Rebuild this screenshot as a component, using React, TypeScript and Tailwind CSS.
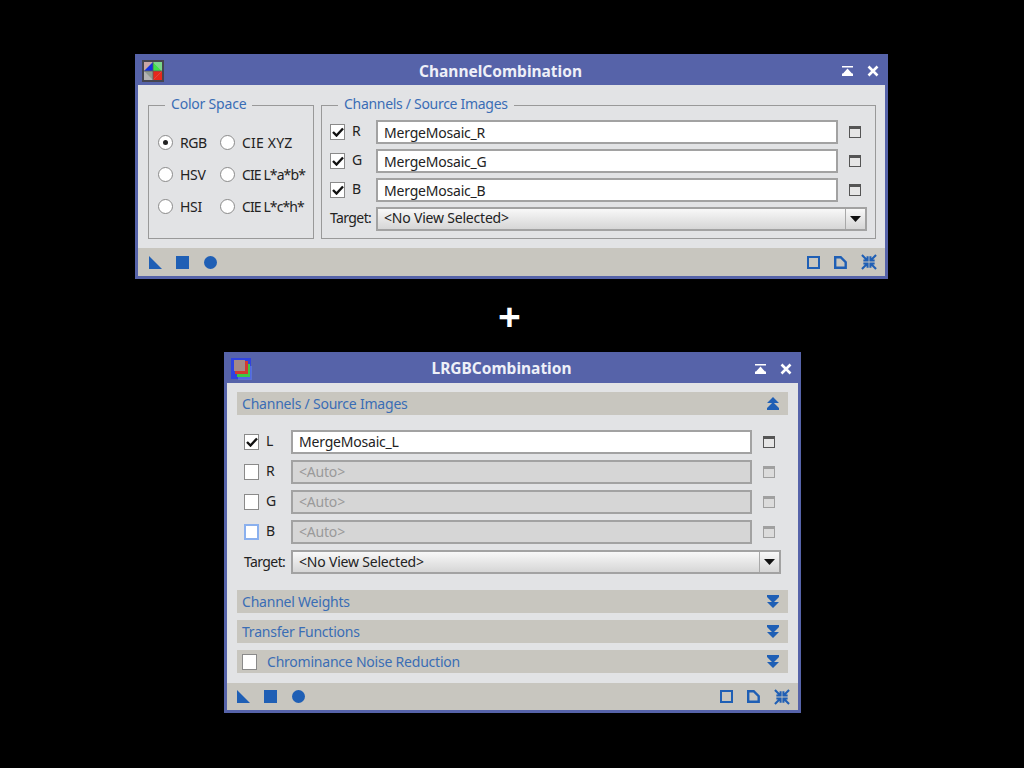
import type { ReactNode } from 'react';

const FONT = "font-['Noto_Sans','Open_Sans',sans-serif]";

const TitleButtons = () => (
  <div className="flex items-center gap-[13px]">
    <svg width="13" height="10" viewBox="0 0 13 10">
      <path d="M1 0h11v1.500H1zM6.500 2.500L11 7.500h1V10H1V7.500h1z" fill="#fff" />
    </svg>
    <svg width="12" height="12" viewBox="0 0 12 12">
      <path d="M1.500 1.500l9 9M10.500 1.500l-9 9" stroke="#fff" strokeWidth="2.600" />
    </svg>
  </div>
);

const ChannelIcon = () => (
  <svg width="22" height="22" viewBox="0 0 22 22">
    <rect width="22" height="22" fill="#45454f" />
    <rect x="2" y="2" width="18" height="18" fill="#b4b4b4" />
    <path d="M2 2h9L2 11z" fill="#c9a6a6" />
    <path d="M2 11l9-9v9z" fill="#1230e0" />
    <path d="M11 2l9 9h-9z" fill="#3fe04a" />
    <path d="M11 2h9v9z" fill="#7ad88a" />
    <path d="M20 11v9h-9z" fill="#e8281c" />
    <path d="M11 11h9l-9 9z" fill="#e8281c" />
    <path d="M2 11h9v9z" fill="#8f9a90" />
    <path d="M11 2v18M2 11h18" stroke="#5a5a5a" strokeWidth="0.800" />
  </svg>
);

const LrgbIcon = () => (
  <svg width="22" height="24" viewBox="0 0 22 24">
    <rect x="0" y="1" width="20" height="21" fill="#2f43e0" />
    <rect x="7" y="9" width="14" height="14" fill="#5d78e8" opacity="0.700" />
    <rect x="6" y="7" width="13" height="13" fill="#3cc845" />
    <rect x="4" y="4" width="13" height="13" fill="#d23a30" />
    <rect x="3" y="3" width="11" height="11" fill="#a58a86" />
  </svg>
);

const TitleBar = ({ title, icon, low }: { title: string; icon: ReactNode; low?: boolean }) => (
  <div className="relative flex h-[28px] items-center justify-between bg-[#5663a9] pl-[4px] pr-[6px]">
    {icon}
    <span
      className={`absolute inset-0 flex items-center justify-center pr-[22px] text-[15.5px] font-bold text-[#eef0f8] ${
        low ? 'pt-[2px]' : ''
      }`}
    >
      {title}
    </span>
    <TitleButtons />
  </div>
);

const Footer = ({ height, left }: { height: string; left: string }) => (
  <div className={`flex items-center justify-between bg-[#c8c6bf] pr-[8px] ${height} ${left}`}>
    <div className="flex items-center">
      <svg width="13" height="13" viewBox="0 0 13 13">
        <path d="M0 0l13 13H0z" fill="#1f5fb5" />
      </svg>
      <div className="ml-[14px] h-[13px] w-[13px] bg-[#1f5fb5]" />
      <div className="ml-[15px] h-[13px] w-[13px] rounded-full bg-[#1f5fb5]" />
    </div>
    <div className="flex items-center gap-[14px]">
      <div className="h-[13px] w-[13px] border-[2.500px] border-[#1f5fb5]" />
      <svg width="13" height="13" viewBox="0 0 13 13">
        <path d="M1.200 1.200h5.500l5 5v5.600H1.200z" fill="none" stroke="#1f5fb5" strokeWidth="2.400" />
      </svg>
      <svg width="16" height="16" viewBox="0 0 17 17">
        <path
          d="M1 1l5 5M7 2.500V7H2.500M16 1l-5 5M10 2.500V7h4.500M1 16l5-5M7 14.500V10H2.500M16 16l-5-5M10 14.500V10h4.500"
          fill="none"
          stroke="#1f5fb5"
          strokeWidth="2.200"
        />
      </svg>
    </div>
  </div>
);

const Radio = ({ label, checked, track }: { label: string; checked?: boolean; track: string }) => (
  <div className="flex h-[32px] items-center gap-[7px]">
    <div className="flex h-[15px] w-[15px] items-center justify-center rounded-full border border-[#8a8a8a] bg-white">
      {checked && <div className="h-[5px] w-[5px] rounded-full bg-[#222]" />}
    </div>
    <span className={`whitespace-nowrap text-[14px] text-[#222] ${track}`}>{label}</span>
  </div>
);

const Check = ({ checked, focus }: { checked?: boolean; focus?: boolean }) => (
  <div
    className={`flex h-[16px] w-[15px] items-center justify-center border bg-white ${
      focus ? 'border-2 border-[#8ab0ee]' : 'border-[#8a8a8a]'
    }`}
  >
    {checked && (
      <svg width="12" height="10" viewBox="0 0 12 10">
        <path d="M1 5l3.500 3.500L11 1.500" fill="none" stroke="#111" strokeWidth="2.400" />
      </svg>
    )}
  </div>
);

const ViewIcon = ({ disabled }: { disabled?: boolean }) => (
  <div
    className={`mr-[6px] h-[12px] w-[12px] justify-self-end border border-t-[3px] ${
      disabled ? 'border-[#a0a0a0] bg-[#dcdcdc]' : 'border-[#555] bg-[#e6e6e6]'
    }`}
  />
);

const ViewRow = ({
  label,
  value,
  checked,
  focus,
  disabled,
  low,
}: {
  label: string;
  value: string;
  checked?: boolean;
  focus?: boolean;
  disabled?: boolean;
  low?: boolean;
}) => (
  <>
    <div className="flex items-center gap-[7px] text-[14px] text-[#222]">
      <Check checked={checked} focus={focus} />
      <span className="-mt-[3px]">{label}</span>
    </div>
    <div
      className={`flex h-[24px] items-center border-2 border-[#a2a2a2] px-[6px] text-[14px] tracking-[-0.2px] ${
        low ? 'pt-px' : 'pb-px'
      } ${disabled ? 'bg-[#d6d6d6] text-[#9a9a9a]' : 'bg-white text-[#222]'}`}
    >
      {value}
    </div>
    <ViewIcon disabled={disabled} />
  </>
);

const TargetRow = ({ high }: { high?: boolean }) => (
  <>
    <span
      className={`whitespace-nowrap text-[14px] tracking-[-0.6px] text-[#222] ${
        high ? '-mt-[4px]' : '-mt-[2px]'
      }`}
    >
      Target:
    </span>
    <div className="col-span-2 flex h-[24px] items-center justify-between border-2 border-[#a2a2a2] bg-gradient-to-b from-[#f8f8f8] to-[#d6d6d6] pl-[6px] text-[14px] tracking-[-0.2px] text-[#222]">
      <span className={high ? '-mt-[4px]' : '-mt-[2px]'}>{'<No View Selected>'}</span>
      <div className="flex h-full w-[20px] items-center justify-center border-l border-[#a8a8a8]">
        <svg width="11" height="6" viewBox="0 0 11 6">
          <path d="M0 0h11L5.500 6z" fill="#111" />
        </svg>
      </div>
    </div>
  </>
);

const Chevrons = ({ up }: { up?: boolean }) => (
  <svg width="12" height="13" viewBox="0 0 12 13">
    {up ? (
      <path d="M6 0l6 6H0zM6 5l6 6H0zM0 11h12v2H0z" fill="#1f5fb5" />
    ) : (
      <path d="M0 0h12v2H0zM0 2h12L6 8zM0 7h12l-6 6z" fill="#1f5fb5" />
    )}
  </svg>
);

const Section = ({ title, up, check }: { title: string; up?: boolean; check?: boolean }) => (
  <div className="flex h-[23px] items-center justify-between bg-[#c8c6bf] pl-[5px] pr-[9px]">
    <div className="flex items-center gap-[10px]">
      {check && <div className="h-[16px] w-[15px] border border-[#8a8a8a] bg-white" />}
      <span className="text-[14px] tracking-[-0.22px] text-[#3a6db5]">{title}</span>
    </div>
    <Chevrons up={up} />
  </div>
);

export default function App() {
  return (
    <div className={`flex h-[768px] w-[1024px] flex-col overflow-hidden bg-black pt-[54px] ${FONT}`}>
      <div className="ml-[135px] w-[753px] border-[3px] border-[#5663a9]">
        <TitleBar title="ChannelCombination" icon={<ChannelIcon />} low />
        <div className="flex h-[163px] gap-[7px] bg-[#e2e3e5] pl-[10px] pr-[9px] pt-[10px]">
          <fieldset className="h-[144px] w-[166px] border border-[#999] pl-[9px]">
            <legend className="ml-[7px] px-[6px] pb-[2px] text-[14px] leading-[18px] tracking-[-0.2px] text-[#3a6db5]">
              Color Space
            </legend>
            <div className="grid grid-cols-[62px_1fr] pt-[11px]">
              <Radio label="RGB" checked track="tracking-[-0.5px]" />
              <Radio label="CIE XYZ" track="tracking-[0.2px]" />
              <Radio label="HSV" track="tracking-[-0.3px]" />
              <Radio label="CIE L*a*b*" track="tracking-[-0.9px]" />
              <Radio label="HSI" track="tracking-[-0.3px]" />
              <Radio label="CIE L*c*h*" track="tracking-[-0.9px]" />
            </div>
          </fieldset>
          <fieldset className="h-[144px] w-[555px] border border-[#999] pl-[8px] pr-[8px]">
            <legend className="ml-[8px] px-[6px] pb-[2px] text-[14px] leading-[18px] tracking-[-0.3px] text-[#3a6db5]">
              Channels / Source Images
            </legend>
            <div className="grid grid-cols-[46px_1fr_29px] items-center gap-y-[5px] pt-[5px]">
              <ViewRow label="R" value="MergeMosaic_R" checked low />
              <ViewRow label="G" value="MergeMosaic_G" checked low />
              <ViewRow label="B" value="MergeMosaic_B" checked low />
              <TargetRow high />
            </div>
          </fieldset>
        </div>
        <Footer height="h-[28px]" left="pl-[11px]" />
      </div>

      <div className="flex h-[73px] w-[1019px] items-center justify-center text-[40px] font-bold leading-none text-white">
        +
      </div>

      <div className="ml-[224px] w-[577px] border-[3px] border-[#5663a9]">
        <TitleBar title="LRGBCombination" icon={<LrgbIcon />} />
        <div className="flex h-[300px] flex-col bg-[#e2e3e5] px-[10px] pt-[9px]">
          <Section title="Channels / Source Images" up />
          <div className="grid grid-cols-[47px_461px_29px] items-center gap-y-[6px] px-[7px] pt-[15px]">
            <ViewRow label="L" value="MergeMosaic_L" checked />
            <ViewRow label="R" value="<Auto>" disabled />
            <ViewRow label="G" value="<Auto>" disabled />
            <ViewRow label="B" value="<Auto>" disabled focus />
            <TargetRow />
          </div>
          <div className="flex flex-col gap-[7px] pt-[16px]">
            <Section title="Channel Weights" />
            <Section title="Transfer Functions" />
            <Section title="Chrominance Noise Reduction" check />
          </div>
        </div>
        <Footer height="h-[27px]" left="pl-[10px]" />
      </div>
    </div>
  );
}
